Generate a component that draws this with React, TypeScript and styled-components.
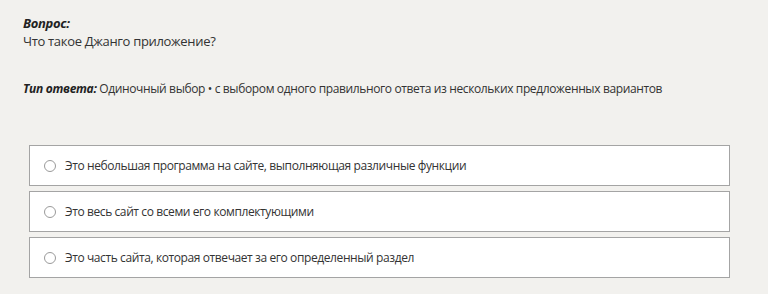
import React from "react";
import styled, { createGlobalStyle } from "styled-components";

const GlobalStyle = createGlobalStyle`
	html, body {
		margin: 0;
		padding: 0;
		background: #f2f1ee;
	}
	body {
		font-family: "Open Sans", "Noto Sans", sans-serif;
		color: #333333;
	}
`;

const Page = styled.div`
	width: 768px;
	height: 294px;
	box-sizing: border-box;
	padding: 14px 38px 0 23px;
	overflow: hidden;
`;

const Label = styled.span`
	font-weight: 700;
	font-style: italic;
	color: #222222;
	letter-spacing: -0.3px;
`;

const Question = styled.div`
	font-size: 13px;
	line-height: 18px;
	letter-spacing: -0.32px;
`;

const AnswerType = styled.div`
	margin-top: 30px;
	font-size: 12px;
	line-height: 18px;
	letter-spacing: -0.37px;
`;

const Options = styled.div`
	margin: 47px 0 0 6px;
	display: flex;
	flex-direction: column;
	gap: 5px;
`;

const Option = styled.label`
	display: flex;
	align-items: center;
	gap: 9px;
	height: 41px;
	box-sizing: border-box;
	padding: 0 14px;
	background: #ffffff;
	border: 1px solid #a4a4a4;
	font-size: 12px;
	letter-spacing: -0.4px;
	color: #333333;
	cursor: pointer;
`;

const Radio = styled.span`
	width: 10px;
	height: 10px;
	border-radius: 50%;
	border: 1px solid #9a9a9a;
	background: #ffffff;
	flex-shrink: 0;
`;

const options = [
	"Это небольшая программа на сайте, выполняющая различные функции",
	"Это весь сайт со всеми его комплектующими",
	"Это часть сайта, которая отвечает за его определенный раздел",
];

export default function App() {
	return (
		<>
			<GlobalStyle />
			<Page>
				<Question>
					<Label>Вопрос:</Label>
					<div>Что такое Джанго приложение?</div>
				</Question>
				<AnswerType>
					<Label>Тип ответа:</Label> Одиночный выбор • с выбором одного правильного ответа из нескольких предложенных вариантов
				</AnswerType>
				<Options>
					{options.map((text) => (
						<Option key={text}>
							<Radio />
							{text}
						</Option>
					))}
				</Options>
			</Page>
		</>
	);
}
